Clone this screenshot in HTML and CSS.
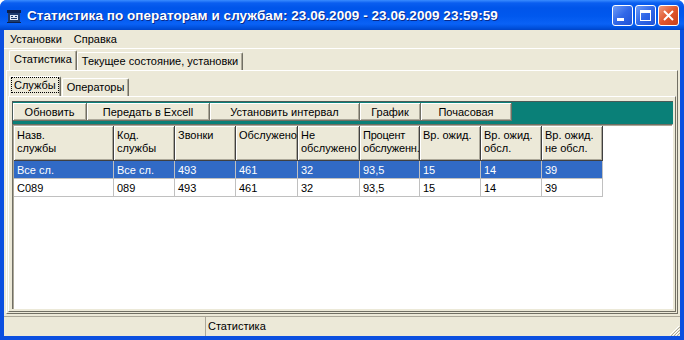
FILE: index.html
```html
<!DOCTYPE html>
<html lang="ru">
<head>
    <meta charset="UTF-8">
    <title>Статистика по операторам и службам</title>
    <link rel="stylesheet" href="styles.css">
</head>
<body>
    <div class="window">
        <!-- Title bar -->
        <div class="titlebar">
            <svg class="app-icon" width="16" height="16" viewBox="0 0 16 16">
                <rect x="1" y="2" width="14" height="3" fill="#0c1f4a"/>
                <rect x="2" y="5" width="12" height="9" fill="#1d3b6e"/>
                <rect x="4" y="7" width="8" height="5" fill="#dfe8f5"/>
                <rect x="5" y="8" width="2" height="1" fill="#1d3b6e"/>
                <rect x="9" y="8" width="2" height="1" fill="#1d3b6e"/>
                <rect x="5" y="10" width="6" height="1" fill="#1d3b6e"/>
                <rect x="1" y="14" width="14" height="1" fill="#0c1f4a"/>
            </svg>
            <span class="title">Статистика по операторам и службам: 23.06.2009 - 23.06.2009 23:59:59</span>
            <div class="caption-btns">
                <span class="cbtn">
                    <svg width="21" height="21" viewBox="0 0 21 21"><rect x="5" y="13" width="7" height="3" fill="#fff"/></svg>
                </span>
                <span class="cbtn">
                    <svg width="21" height="21" viewBox="0 0 21 21"><rect x="5.5" y="5.5" width="10" height="10" fill="none" stroke="#fff"/><rect x="5" y="5" width="11" height="3" fill="#fff"/></svg>
                </span>
                <span class="cbtn close">
                    <svg width="21" height="21" viewBox="0 0 21 21"><path d="M6 6 L15 15 M15 6 L6 15" stroke="#fff" stroke-width="2"/></svg>
                </span>
            </div>
        </div>

        <div class="frame">
            <!-- Menu -->
            <div class="menubar">
                <span class="menu-item">Установки</span>
                <span class="menu-item">Справка</span>
            </div>

            <!-- Outer tabs -->
            <div class="tabs">
                <span class="tab active">Статистика</span>
                <span class="tab">Текущее состояние, установки</span>
            </div>
            <div class="tabpanel">
                <div class="tabs inner">
                    <span class="tab active"><span class="focus">Службы</span></span>
                    <span class="tab">Операторы</span>
                </div>
                <div class="innerpanel">
                    <div class="toolbar">
                        <button class="tbtn w-refresh">Обновить</button>
                        <button class="tbtn w-excel">Передать в Excell</button>
                        <button class="tbtn w-interval">Установить интервал</button>
                        <button class="tbtn w-chart">График</button>
                        <button class="tbtn w-hourly">Почасовая</button>
                    </div>
                    <div class="grid">
                        <div class="row head">
                            <div class="cell c1">Назв.<br>службы</div>
                            <div class="cell c2">Код.<br>службы</div>
                            <div class="cell c3">Звонки</div>
                            <div class="cell c4">Обслужено</div>
                            <div class="cell c5">Не<br>обслужено</div>
                            <div class="cell c6">Процент<br>обслуженн.</div>
                            <div class="cell c7">Вр. ожид.</div>
                            <div class="cell c8">Вр. ожид.<br>обсл.</div>
                            <div class="cell c9">Вр. ожид.<br>не обсл.</div>
                        </div>
                        <div class="row selected">
                            <div class="cell c1">Все сл.</div>
                            <div class="cell c2">Все сл.</div>
                            <div class="cell c3">493</div>
                            <div class="cell c4">461</div>
                            <div class="cell c5">32</div>
                            <div class="cell c6">93,5</div>
                            <div class="cell c7">15</div>
                            <div class="cell c8">14</div>
                            <div class="cell c9">39</div>
                        </div>
                        <div class="row">
                            <div class="cell c1">C089</div>
                            <div class="cell c2">089</div>
                            <div class="cell c3">493</div>
                            <div class="cell c4">461</div>
                            <div class="cell c5">32</div>
                            <div class="cell c6">93,5</div>
                            <div class="cell c7">15</div>
                            <div class="cell c8">14</div>
                            <div class="cell c9">39</div>
                        </div>
                    </div>
                </div>
            </div>

            <!-- Status bar -->
            <div class="statusbar">
                <div class="spanel first"></div>
                <div class="spanel">Статистика</div>
                <svg class="grip" width="12" height="12" viewBox="0 0 12 12">
                    <path d="M11 2 L2 11 M11 5 L5 11 M11 8 L8 11" stroke="#fff" stroke-width="1"/>
                    <path d="M12 3 L3 12 M12 6 L6 12 M12 9 L9 12" stroke="#aca899" stroke-width="1"/>
                </svg>
            </div>
        </div>
    </div>
</body>
</html>
```

FILE: styles.css
```css
* {
    box-sizing: border-box;
}
body {
    margin: 0;
    font-family: "Liberation Sans", Arial, sans-serif;
    font-size: 11px;
    color: #000;
    background: #fff;
}
.window {
    width: 684px;
    height: 340px;
    display: flex;
    flex-direction: column;
    background: #0b4fe0;
    border-radius: 7px 7px 0 0;
    overflow: hidden;
}
.titlebar {
    height: 30px;
    flex: none;
    display: flex;
    align-items: center;
    padding: 0 5px 0 6px;
    color: #fff;
    background: linear-gradient(#3a8cff 0, #0a5ef0 3px, #0055ea 8px, #0058ee 16px, #0a62f6 24px, #0050dc 28px, #0044c8 30px);
}
.app-icon {
    flex: none;
    margin-top: 1px;
}
.title {
    flex: 1;
    margin-left: 5px;
    font-weight: bold;
    font-size: 13.5px;
    letter-spacing: 0.05px;
    text-shadow: 1px 1px #0a2a8a;
    white-space: nowrap;
}
.caption-btns {
    display: flex;
    gap: 2px;
}
.cbtn {
    width: 21px;
    height: 21px;
    border: 1px solid #fff;
    border-radius: 3px;
    background: linear-gradient(135deg, #6f9cf6 0, #3168e8 50%, #1f52d6 100%);
    display: flex;
}
.cbtn svg {
    margin: -1px;
}
.cbtn.close {
    background: linear-gradient(135deg, #f09a7c 0, #e0562c 50%, #c8401a 100%);
}
.frame {
    flex: 1;
    margin: 0 4px 4px;
    background: #ece9d8;
    display: flex;
    flex-direction: column;
}
.menubar {
    height: 19px;
    flex: none;
    display: flex;
    align-items: center;
    border-bottom: 1px solid #fff;
}
.menu-item {
    padding: 0 6px;
}

/* tabs */
.tabs {
    display: flex;
    height: 21px;
    flex: none;
    padding: 3px 0 0 5px;
    align-items: flex-end;
}
.tab {
    height: 18px;
    line-height: 17px;
    padding: 0 4px;
    border-left: 1px solid #fff;
    border-top: 1px solid #fff;
    border-right: 1px solid #716f64;
    box-shadow: inset -1px 0 #aca899;
    border-radius: 2px 2px 0 0;
}
.tab.active {
    height: 20px;
    margin-top: -2px;
}
.tabpanel {
    flex: 1;
    margin: 0 2px 2px 2px;
    border-left: 1px solid #fff;
    border-top: 1px solid #fff;
    border-right: 1px solid #716f64;
    border-bottom: 1px solid #716f64;
    display: flex;
    flex-direction: column;
    padding: 4px 1px 1px 1px;
}
.tabs.inner {
    padding-left: 1px;
}
.tabs.inner .tab.active {
    padding: 0 1px;
}
.focus {
    display: inline-block;
    border: 1px dotted #000;
    line-height: 14px;
    padding: 0 2px;
}
.tabs.inner .tab:last-child {
    margin-left: 1px;
}
.innerpanel {
    flex: 1;
    border-left: 1px solid #fff;
    border-top: 1px solid #fff;
    border-right: 1px solid #716f64;
    border-bottom: 1px solid #716f64;
    padding: 4px 2px 2px 3px;
    display: flex;
    flex-direction: column;
}

/* toolbar */
.toolbar {
    flex: none;
    height: 23px;
    background: #0a8078;
    border-top: 1px solid #4a5a58;
    border-left: 1px solid #4a5a58;
    display: flex;
    align-items: flex-start;
    padding-top: 1px;
}
.tbtn {
    height: 18px;
    font: 11px "Liberation Sans", Arial, sans-serif;
    background: #ece9d8;
    border: none;
    border-right: 1px solid #716f64;
    border-bottom: 1px solid #716f64;
    box-shadow: inset 1px 1px #fff, inset -1px -1px #aca899;
    padding: 0;
    text-align: center;
    color: #000;
}
.w-refresh { width: 74px; }
.w-excel { width: 123px; }
.w-interval { width: 150px; }
.w-chart { width: 61px; }
.w-hourly { width: 91px; }

/* grid */
.grid {
    flex: 1;
    background: #fff;
    border-top: 1px solid #716f64;
    border-left: 1px solid #716f64;
    border-right: 1px solid #fff;
    box-shadow: inset 1px 1px #aca899;
    padding: 1px 0 0 1px;
}
.row {
    display: flex;
    height: 18px;
}
.row.head {
    height: 35px;
}
.cell {
    padding: 2px 3px 0 3px;
    line-height: 14px;
    white-space: nowrap;
    overflow: hidden;
    border-right: 1px solid #c0c0c0;
    border-bottom: 1px solid #c0c0c0;
}
.row.head .cell {
    background: #ece9d8;
    padding: 3px 3px 0 3px;
    line-height: 13px;
    border-right: 1px solid #404040;
    border-bottom: 1px solid #404040;
    box-shadow: inset 1px 1px #fff, inset -1px -1px #aca899;
}
.row.head .c6 {
    padding: 3px 0 0 3px;
    letter-spacing: -0.2px;
}
.row.selected .cell {
    background: #316ac5;
    color: #fff;
    border-right-color: #c0c0c0;
}
.c1 { width: 100px; }
.c2 { width: 61px; }
.c3 { width: 61px; }
.c4 { width: 62px; }
.c5 { width: 62px; }
.c6 { width: 60px; }
.c7 { width: 61px; }
.c8 { width: 61px; }
.c9 { width: 61px; }

/* status bar */
.statusbar {
    height: 20px;
    flex: none;
    display: flex;
    align-items: stretch;
    border-top: 1px solid #aca899;
    position: relative;
}
.spanel {
    border-left: 1px solid #aca899;
    padding: 3px 2px 0;
    flex: 1;
}
.spanel.first {
    flex: none;
    width: 201px;
    border-left: none;
}
.grip {
    position: absolute;
    right: 0;
    bottom: 0;
}
```
